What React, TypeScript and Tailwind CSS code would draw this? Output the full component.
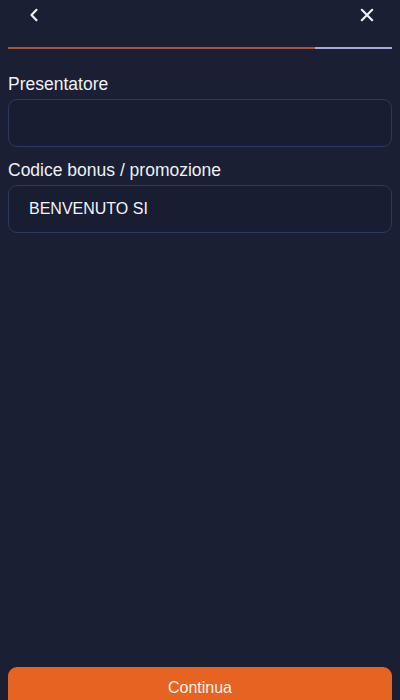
import React from "react";

const Field = ({ label, value }: { label: string; value?: string }) => (
  <div className="flex flex-col">
    <label className="text-[17.5px] leading-[20px] text-[#eef0f6] mb-[5px]">{label}</label>
    <div className="h-[48px] rounded-[9px] border border-[#2d3863] bg-[#191d32] flex items-center px-[20px] text-[16px] text-[#f2f3f8]">
      {value}
    </div>
  </div>
);

export default function App() {
  return (
    <div
      className="w-[400px] h-[700px] bg-[#1b1f33] overflow-hidden"
      style={{ fontFamily: "'Liberation Sans', Arial, sans-serif" }}
    >
      <div className="h-[709px] flex flex-col">
        <div className="h-[30px] flex items-center justify-between pl-[29px] pr-[26px]">
          <svg width="10" height="14" viewBox="0 0 10 14" fill="none" stroke="#eef0f6" strokeWidth="2.2" strokeLinecap="round" strokeLinejoin="round">
            <path d="M7.5 1.8L2.5 7l5 5.2" />
          </svg>
          <svg width="14" height="14" viewBox="0 0 14 14" fill="none" stroke="#eef0f6" strokeWidth="2.2" strokeLinecap="round">
            <path d="M1.8 1.8l10.4 10.4M12.2 1.8L1.8 12.2" />
          </svg>
        </div>
        <div className="mx-[8px] mt-[17px] h-[2px] flex">
          <div className="w-[307px] bg-[#a4553f]" />
          <div className="flex-1 bg-[#a3abd2]" />
        </div>
        <div className="px-[8px] pt-[25px] flex flex-col gap-[13px]">
          <Field label="Presentatore" />
          <Field label="Codice bonus / promozione" value="BENVENUTO SI" />
        </div>
        <div className="flex-1" />
        <div className="px-[8px]">
          <button className="w-full h-[42px] rounded-t-[9px] bg-[#e66322] text-[#fdf3ec] text-[16px]">
            Continua
          </button>
        </div>
      </div>
    </div>
  );
}
